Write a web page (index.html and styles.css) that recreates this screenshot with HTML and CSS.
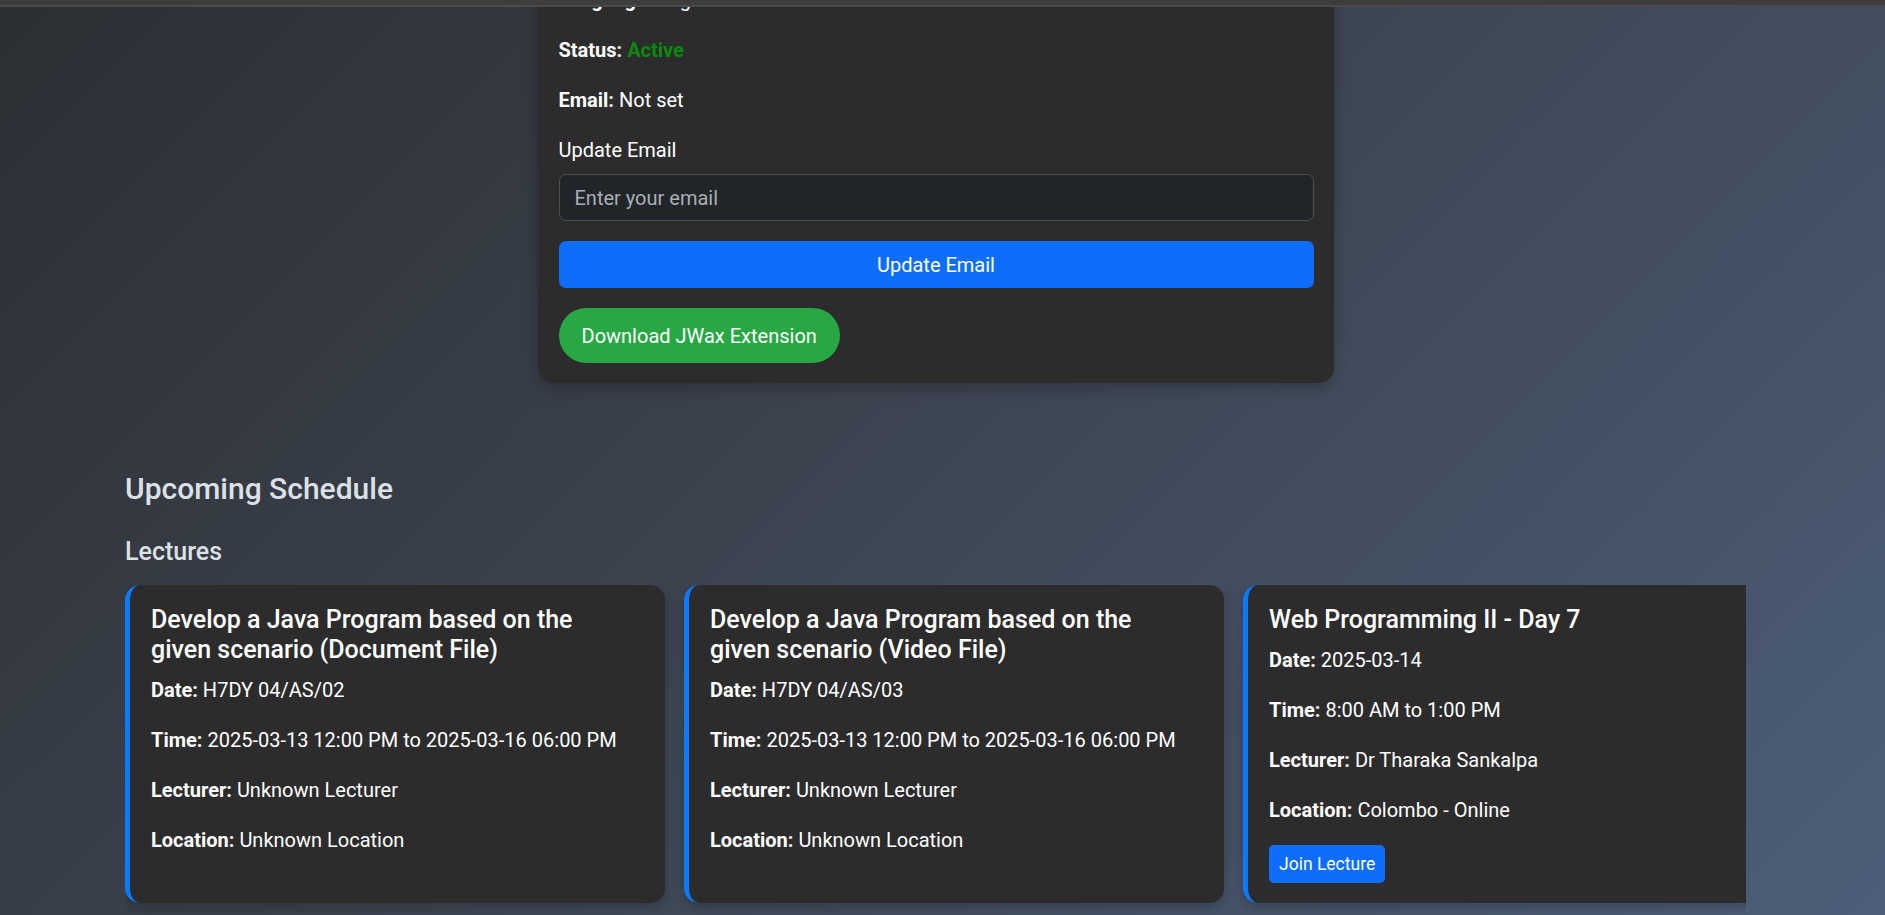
FILE: index.html
```html
<!DOCTYPE html>
<html lang="en">
<head>
<meta charset="utf-8">
<title>Dashboard</title>
<link rel="stylesheet" href="styles.css">
</head>
<body>
<div class="topbar"></div>
<main class="page">
  <section class="profile-wrap">
    <div class="profile-card">
      <p><strong>Language:</strong> English</p>
      <p><strong>Status:</strong> <span class="active">Active</span></p>
      <p><strong>Email:</strong> Not set</p>
      <label class="field-label" for="email">Update Email</label>
      <input class="field-input" id="email" type="email" placeholder="Enter your email">
      <button class="btn-primary-block" type="button">Update Email</button>
      <button class="btn-download" type="button">Download JWax Extension</button>
    </div>
  </section>

  <section class="schedule">
    <h4 class="schedule-title">Upcoming Schedule</h4>
    <h5 class="schedule-sub">Lectures</h5>
    <div class="card-row">
      <article class="lecture-card">
        <h5 class="lecture-title">Develop a Java Program based on the given scenario (Document File)</h5>
        <p><strong>Date:</strong> H7DY 04/AS/02</p>
        <p><strong>Time:</strong> 2025-03-13 12:00 PM to 2025-03-16 06:00 PM</p>
        <p><strong>Lecturer:</strong> Unknown Lecturer</p>
        <p><strong>Location:</strong> Unknown Location</p>
      </article>
      <article class="lecture-card">
        <h5 class="lecture-title">Develop a Java Program based on the given scenario (Video File)</h5>
        <p><strong>Date:</strong> H7DY 04/AS/03</p>
        <p><strong>Time:</strong> 2025-03-13 12:00 PM to 2025-03-16 06:00 PM</p>
        <p><strong>Lecturer:</strong> Unknown Lecturer</p>
        <p><strong>Location:</strong> Unknown Location</p>
      </article>
      <article class="lecture-card">
        <h5 class="lecture-title">Web Programming II - Day 7</h5>
        <p><strong>Date:</strong> 2025-03-14</p>
        <p><strong>Time:</strong> 8:00 AM to 1:00 PM</p>
        <p><strong>Lecturer:</strong> Dr Tharaka Sankalpa</p>
        <p><strong>Location:</strong> Colombo - Online</p>
        <button class="btn-join" type="button">Join Lecture</button>
      </article>
    </div>
  </section>
</main>
</body>
</html>
```

FILE: styles.css
```css
* {
  box-sizing: border-box;
}

html, body {
  margin: 0;
  padding: 0;
}

body {
  width: 1885px;
  height: 915px;
  overflow: hidden;
  font-family: Roboto, "Liberation Sans", sans-serif;
  font-size: 20px;
  line-height: 30px;
  color: #ffffff;
  background: linear-gradient(135deg, #2c2e33 0%, #3a414c 40%, #4c5e78 100%);
}

.topbar {
  position: fixed;
  top: 0;
  left: 0;
  right: 0;
  height: 7px;
  background: #3d3d3d;
  border-bottom: 2px solid #4b4b4b;
  z-index: 10;
}

.page {
  display: flex;
  flex-direction: column;
}

.profile-wrap {
  display: flex;
  justify-content: center;
  padding-right: 14px;
}

.profile-card {
  width: 796px;
  margin-top: -35px;
  padding: 20px 20px 20px 21px;
  background: #2c2c2c;
  border-radius: 15px;
  box-shadow: 0 5px 15px rgba(0, 0, 0, 0.25);
  display: flex;
  flex-direction: column;
  align-items: flex-start;
}

.profile-card p {
  margin: 0 0 20px;
}

strong {
  font-weight: 700;
}

.active {
  color: #0a8a0a;
  font-weight: 700;
}

.field-label {
  display: block;
  margin-bottom: 9px;
}

.field-input {
  width: 100%;
  height: 47px;
  padding: 7px 15px;
  font-family: inherit;
  font-size: 20px;
  line-height: 30px;
  color: #e9ecef;
  background: #212529;
  border: 1px solid #4b5057;
  border-radius: 7px;
  outline: none;
}

.field-input::placeholder {
  color: #a9aeb3;
}

.btn-primary-block {
  width: 100%;
  margin-top: 20px;
  height: 47px;
  padding: 0 15px;
  font-family: inherit;
  font-size: 20px;
  line-height: 30px;
  color: #ffffff;
  background: #0d6efd;
  border: none;
  border-radius: 7px;
}

.btn-download {
  margin-top: 20px;
  height: 55px;
  padding: 0 23px;
  font-family: inherit;
  font-size: 20px;
  line-height: 30px;
  color: #ffffff;
  background: #28a745;
  border: none;
  border-radius: 28px;
}

.schedule {
  margin-top: 88px;
  padding-left: 125px;
}

.schedule-title {
  margin: 0 0 30px;
  font-size: 30px;
  line-height: 36px;
  font-weight: 500;
  color: #dde1e6;
}

.schedule-sub {
  margin: 0 0 18px;
  font-size: 25px;
  line-height: 30px;
  font-weight: 500;
  color: #dde1e6;
}

.card-row {
  width: 1621px;
  overflow: hidden;
  display: flex;
  gap: 19px;
  align-items: stretch;
  padding-bottom: 20px;
}

.lecture-card {
  flex: 0 0 540px;
  height: 318px;
  padding: 20px 26px 20px 21px;
  background: #2c2c2c;
  border-left: 5px solid #0a7bff;
  border-radius: 15px;
  box-shadow: 0 4px 12px rgba(0, 0, 0, 0.22);
  display: flex;
  flex-direction: column;
  align-items: flex-start;
}

.lecture-title {
  max-width: 460px;
  margin: 0 0 10px;
  font-size: 25px;
  line-height: 30px;
  font-weight: 500;
  color: #ffffff;
}

.lecture-card p {
  margin: 0 0 20px;
  white-space: nowrap;
}

.btn-join {
  height: 38px;
  padding: 0 10px;
  font-family: inherit;
  font-size: 17.5px;
  line-height: 26px;
  color: #ffffff;
  background: #0d6efd;
  border: none;
  border-radius: 5px;
}
```
